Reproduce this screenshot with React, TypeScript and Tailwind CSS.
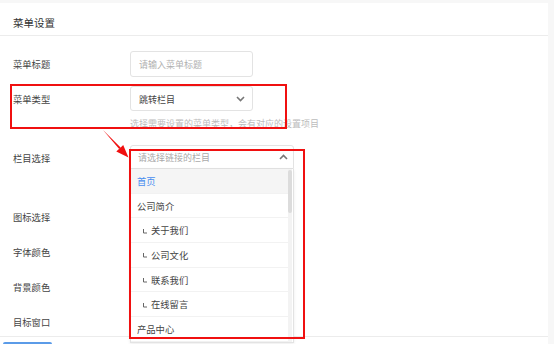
import React from "react";

const font = { fontFamily: '"Noto Sans CJK SC", "Noto Sans", sans-serif' };

function Chevron({ up = false }: { up?: boolean }) {
  return (
    <svg width="9" height="6" viewBox="0 0 9 6" className="block">
      <path
        d={up ? "M1 5 L4.5 1.5 L8 5" : "M1 1 L4.5 4.5 L8 1"}
        fill="none"
        stroke="#777"
        strokeWidth="1.6"
      />
    </svg>
  );
}

function Hook() {
  return (
    <svg width="6" height="7" viewBox="0 0 6 7" className="block mr-[3px]">
      <path d="M1.5 1 V5 H5" fill="none" stroke="#666" strokeWidth="1" />
    </svg>
  );
}

const items: { label: string; sub?: boolean; active?: boolean }[] = [
  { label: "首页", active: true },
  { label: "公司简介" },
  { label: "关于我们", sub: true },
  { label: "公司文化", sub: true },
  { label: "联系我们", sub: true },
  { label: "在线留言", sub: true },
  { label: "产品中心" },
];

function Label({ children }: { children: React.ReactNode }) {
  return <div className="w-[117px] shrink-0 pt-[2px] text-[9.3px] text-[#444]">{children}</div>;
}

export default function App() {
  return (
    <div className="w-[554px] h-[344px] bg-[#f7f7f7] overflow-hidden relative" style={font}>
      <div className="w-[548px] mt-[3px] h-[341px] bg-white flex flex-col">
        <div className="h-[33px] border-b border-[#ececec] pl-[13px] pt-[13px] text-[10.5px] leading-[14px] text-[#333]">
          菜单设置
        </div>

        <div className="pl-[13px] flex flex-col">
          {/* row 1 */}
          <div className="mt-[15px] h-[26px] flex items-center">
            <Label>菜单标题</Label>
            <div className="w-[123px] h-[26px] border border-[#e3e3e3] rounded-[3px] flex items-center pl-[8px] pt-[2px] text-[9px] text-[#b0b0b0]">
              请输入菜单标题
            </div>
          </div>

          {/* row 2 */}
          <div className="mt-[9px] h-[25px] flex items-center">
            <Label>菜单类型</Label>
            <div className="w-[123px] h-[25px] border border-[#e3e3e3] rounded-[3px] flex items-center justify-between pl-[8px] pr-[7px] text-[9px] text-[#444]">
              <span className="pt-[2px]">跳转栏目</span>
              <Chevron />
            </div>
          </div>
          <div className="mt-[7px] pl-[117px] text-[9px] leading-[12px] text-[#bcbcbc]">
            选择需要设置的菜单类型，会有对应的设置项目
          </div>

          {/* row 3 */}
          <div className="mt-[15px] h-[24px] flex items-center">
            <div className="w-[117px] shrink-0 pt-[3px] text-[9.3px] text-[#444]">栏目选择</div>
            <div className="relative w-[164px] h-[24px]">
              <div className="h-[24px] border border-[#e3e3e3] rounded-t-[3px] flex items-center justify-between pl-[7px] pr-[5px] text-[9px] text-[#aaa]">
                <span className="pt-[2px]">请选择链接的栏目</span>
                <Chevron up />
              </div>
              <div className="absolute left-0 top-[24px] w-[164px] h-[174px] bg-white border border-t-0 border-[#e3e3e3] shadow-[0_1px_3px_rgba(0,0,0,0.08)] flex z-10">
                <div className="flex-1 flex flex-col">
                  {items.map((it) => (
                    <div
                      key={it.label}
                      className={
                        "h-[24.7px] shrink-0 flex items-center pt-[2px] border-b border-[#f2f2f2] text-[9.3px] " +
                        (it.active ? "bg-[#f5f5f5] text-[#4a8ff0] pl-[6px]" : "text-[#444] ") +
                        (it.sub ? "pl-[11px]" : it.active ? "" : "pl-[6px]")
                      }
                    >
                      {it.sub && <Hook />}
                      {it.label}
                    </div>
                  ))}
                </div>
                <div className="w-[4px] mr-[1px] bg-[#f3f3f3] flex flex-col">
                  <div className="mt-[1px] h-[43px] bg-[#dcdcdc] rounded-[2px]" />
                </div>
              </div>
            </div>
          </div>

          <div className="mt-[35px] h-[25px] flex items-center">
            <Label>图标选择</Label>
          </div>
          <div className="mt-[10px] h-[25px] flex items-center">
            <Label>字体颜色</Label>
          </div>
          <div className="mt-[10px] h-[25px] flex items-center">
            <Label>背景颜色</Label>
          </div>
          <div className="mt-[10px] h-[25px] flex items-center">
            <Label>目标窗口</Label>
          </div>
        </div>
        <div className="mt-[2px] border-t border-[#ececec]" />
        <div className="mt-[5px] ml-[3px] w-[49px] h-[2px] bg-[#5b9be8] rounded-t-[2px]" />
      </div>

      {/* annotations */}
      <div className="absolute left-[10px] top-[84px] w-[277px] h-[45px] border-2 border-[#f01010] z-20" />
      <div className="absolute left-[129px] top-[149px] w-[176px] h-[190px] border-2 border-[#f01010] z-20" />
      <svg className="absolute left-0 top-0 z-20" width="554" height="344" viewBox="0 0 554 344">
        <polygon
          points="103,130 120.6,147.5 116.3,151.6 128.5,157.5 123.2,144.9 119.2,148.9"
          fill="#f01010"
        />
      </svg>
    </div>
  );
}
